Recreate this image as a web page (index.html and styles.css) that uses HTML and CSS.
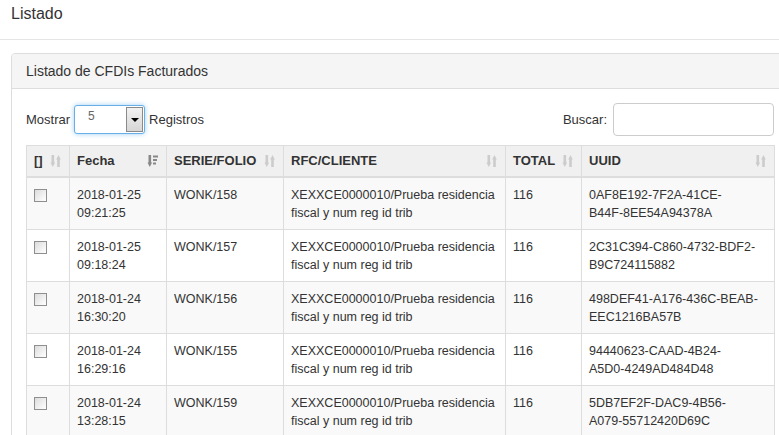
FILE: index.html
```
<!DOCTYPE html>
<html lang="es">
<head>
    <meta charset="UTF-8">
    <meta name="viewport" content="width=device-width, initial-scale=1.0">
    <title>Listado</title>
    <link rel="stylesheet" href="styles.css">
</head>
<body>
    <div class="page">
        <h2 class="page-title">Listado</h2>
        <hr class="divider">

        <div class="panel">
            <div class="panel-heading">Listado de CFDIs Facturados</div>
            <div class="panel-body">
                <div class="toolbar">
                    <div class="length">
                        <span>Mostrar</span>
                        <div class="select">
                            <span class="select-value">5</span>
                            <span class="select-btn"><span class="caret"></span></span>
                        </div>
                        <span>Registros</span>
                    </div>
                    <div class="filter">
                        <label for="buscar">Buscar:</label>
                        <input type="text" id="buscar" class="search">
                    </div>
                </div>

                <table class="grid">
                    <colgroup>
                        <col style="width:43px">
                        <col style="width:97px">
                        <col style="width:117px">
                        <col style="width:222px">
                        <col style="width:76px">
                        <col style="width:193px">
                    </colgroup>
                    <thead>
                        <tr>
                            <th><span class="th-text">[]</span><svg class="sort" viewBox="0 0 11 12"><rect x="1" y="0" width="2.6" height="8"/><polygon points="0,7.5 4.6,7.5 2.3,12"/><polygon points="5.7,4.5 10.3,4.5 8,0"/><rect x="6.7" y="4" width="2.6" height="8"/></svg></th>
                            <th><span class="th-text">Fecha</span><svg class="sort active" viewBox="0 0 11 12"><rect x="1" y="0" width="2.6" height="8"/><polygon points="0,7.5 4.6,7.5 2.3,12"/><rect x="5.5" y="0.5" width="5" height="2"/><rect x="5.5" y="4" width="4" height="2"/><rect x="5.5" y="7.5" width="3" height="2"/></svg></th>
                            <th><span class="th-text">SERIE/FOLIO</span><svg class="sort" viewBox="0 0 11 12"><rect x="1" y="0" width="2.6" height="8"/><polygon points="0,7.5 4.6,7.5 2.3,12"/><polygon points="5.7,4.5 10.3,4.5 8,0"/><rect x="6.7" y="4" width="2.6" height="8"/></svg></th>
                            <th><span class="th-text">RFC/CLIENTE</span><svg class="sort" viewBox="0 0 11 12"><rect x="1" y="0" width="2.6" height="8"/><polygon points="0,7.5 4.6,7.5 2.3,12"/><polygon points="5.7,4.5 10.3,4.5 8,0"/><rect x="6.7" y="4" width="2.6" height="8"/></svg></th>
                            <th><span class="th-text">TOTAL</span><svg class="sort" viewBox="0 0 11 12"><rect x="1" y="0" width="2.6" height="8"/><polygon points="0,7.5 4.6,7.5 2.3,12"/><polygon points="5.7,4.5 10.3,4.5 8,0"/><rect x="6.7" y="4" width="2.6" height="8"/></svg></th>
                            <th><span class="th-text">UUID</span><svg class="sort" viewBox="0 0 11 12"><rect x="1" y="0" width="2.6" height="8"/><polygon points="0,7.5 4.6,7.5 2.3,12"/><polygon points="5.7,4.5 10.3,4.5 8,0"/><rect x="6.7" y="4" width="2.6" height="8"/></svg></th>
                        </tr>
                    </thead>
                    <tbody>
                        <tr>
                            <td><input type="checkbox" class="check"></td>
                            <td>2018-01-25 09:21:25</td>
                            <td>WONK/158</td>
                            <td>XEXXCE0000010/Prueba residencia fiscal y num reg id trib</td>
                            <td>116</td>
                            <td>0AF8E192-7F2A-41CE-<br>B44F-8EE54A94378A</td>
                        </tr>
                        <tr>
                            <td><input type="checkbox" class="check"></td>
                            <td>2018-01-25 09:18:24</td>
                            <td>WONK/157</td>
                            <td>XEXXCE0000010/Prueba residencia fiscal y num reg id trib</td>
                            <td>116</td>
                            <td>2C31C394-C860-4732-BDF2-<br>B9C724115882</td>
                        </tr>
                        <tr>
                            <td><input type="checkbox" class="check"></td>
                            <td>2018-01-24 16:30:20</td>
                            <td>WONK/156</td>
                            <td>XEXXCE0000010/Prueba residencia fiscal y num reg id trib</td>
                            <td>116</td>
                            <td>498DEF41-A176-436C-BEAB-<br>EEC1216BA57B</td>
                        </tr>
                        <tr>
                            <td><input type="checkbox" class="check"></td>
                            <td>2018-01-24 16:29:16</td>
                            <td>WONK/155</td>
                            <td>XEXXCE0000010/Prueba residencia fiscal y num reg id trib</td>
                            <td>116</td>
                            <td>94440623-CAAD-4B24-<br>A5D0-4249AD484D48</td>
                        </tr>
                        <tr>
                            <td><input type="checkbox" class="check"></td>
                            <td>2018-01-24 13:28:15</td>
                            <td>WONK/159</td>
                            <td>XEXXCE0000010/Prueba residencia fiscal y num reg id trib</td>
                            <td>116</td>
                            <td>5DB7EF2F-DAC9-4B56-<br>A079-55712420D69C</td>
                        </tr>
                    </tbody>
                </table>
            </div>
        </div>
    </div>
</body>
</html>
```

FILE: styles.css
```
/* Basic reset */
* {
    box-sizing: border-box;
    margin: 0;
    padding: 0;
}

body {
    font-family: "Liberation Sans", Arial, sans-serif;
    font-size: 13px;
    color: #333;
    background: #fff;
    overflow: hidden;
}

.page {
    width: 800px;
    padding: 0 0 0 11px;
}

/* Page header */
.page-title {
    font-size: 16px;
    font-weight: normal;
    line-height: 18px;
    padding-top: 5px;
    color: #333;
}

.divider {
    border: none;
    border-top: 1px solid #e5e5e5;
    margin: 16px 0 0 -11px;
}

/* Panel */
.panel {
    margin-top: 13px;
    border: 1px solid #ddd;
    border-radius: 4px;
    background: #fff;
}

.panel-heading {
    background: #f5f5f5;
    border-bottom: 1px solid #ddd;
    padding: 10px 14px;
    font-size: 14px;
    line-height: 14px;
    border-radius: 3px 3px 0 0;
}

.panel-body {
    padding: 12px 14px 15px 14px;
}

/* Length + filter row */
.toolbar {
    display: flex;
    justify-content: space-between;
    align-items: center;
    width: 748px;
    height: 33px;
}

.length {
    display: flex;
    align-items: center;
    gap: 4px;
    padding-top: 3px;
}

.select {
    position: relative;
    width: 71px;
    height: 29px;
    border: 1px solid #66afe9;
    border-radius: 3px;
    box-shadow: 0 0 5px rgba(102, 175, 233, 0.6);
    background: #fff;
}

.select-value {
    position: absolute;
    left: 13px;
    top: 3px;
    font-size: 12px;
    color: #666;
}

.select-btn {
    position: absolute;
    right: 1px;
    top: 1px;
    width: 17px;
    height: 25px;
    border: 1px solid #8a8a8a;
    background: linear-gradient(#f2f2f2, #d6d6d6);
}

.caret {
    position: absolute;
    left: 4px;
    top: 10px;
    border-left: 4px solid transparent;
    border-right: 4px solid transparent;
    border-top: 4px solid #000;
}

.filter {
    display: flex;
    align-items: center;
    gap: 6px;
    padding-top: 3px;
}

.search {
    width: 161px;
    height: 33px;
    border: 1px solid #ccc;
    border-radius: 4px;
    font-size: 13px;
}

/* Table */
.grid {
    margin-top: 11px;
    width: 748px;
    table-layout: fixed;
    border-collapse: collapse;
    font-size: 12.5px;
}

.grid th,
.grid td {
    border: 1px solid #ddd;
    text-align: left;
    vertical-align: top;
}

.grid th {
    position: relative;
    background: #f0f0f0;
    font-size: 13px;
    font-weight: bold;
    line-height: 16px;
    padding: 7px 8px 7px 7px;
    border-bottom-width: 2px;
}

.grid td {
    line-height: 18px;
    padding: 8px 8px 7px 7px;
}

.grid tbody tr:nth-child(odd) td {
    background: #f9f9f9;
}

.sort {
    position: absolute;
    right: 7px;
    top: 9px;
    width: 12px;
    height: 12px;
    fill: #ccc;
}

.sort.active {
    fill: #888;
}

.check {
    appearance: none;
    display: block;
    width: 13px;
    height: 13px;
    margin: 3px 0 0 0;
    border: 1px solid #8f8f8f;
    background: linear-gradient(135deg, #dcdcdc, #fff);
}
```
